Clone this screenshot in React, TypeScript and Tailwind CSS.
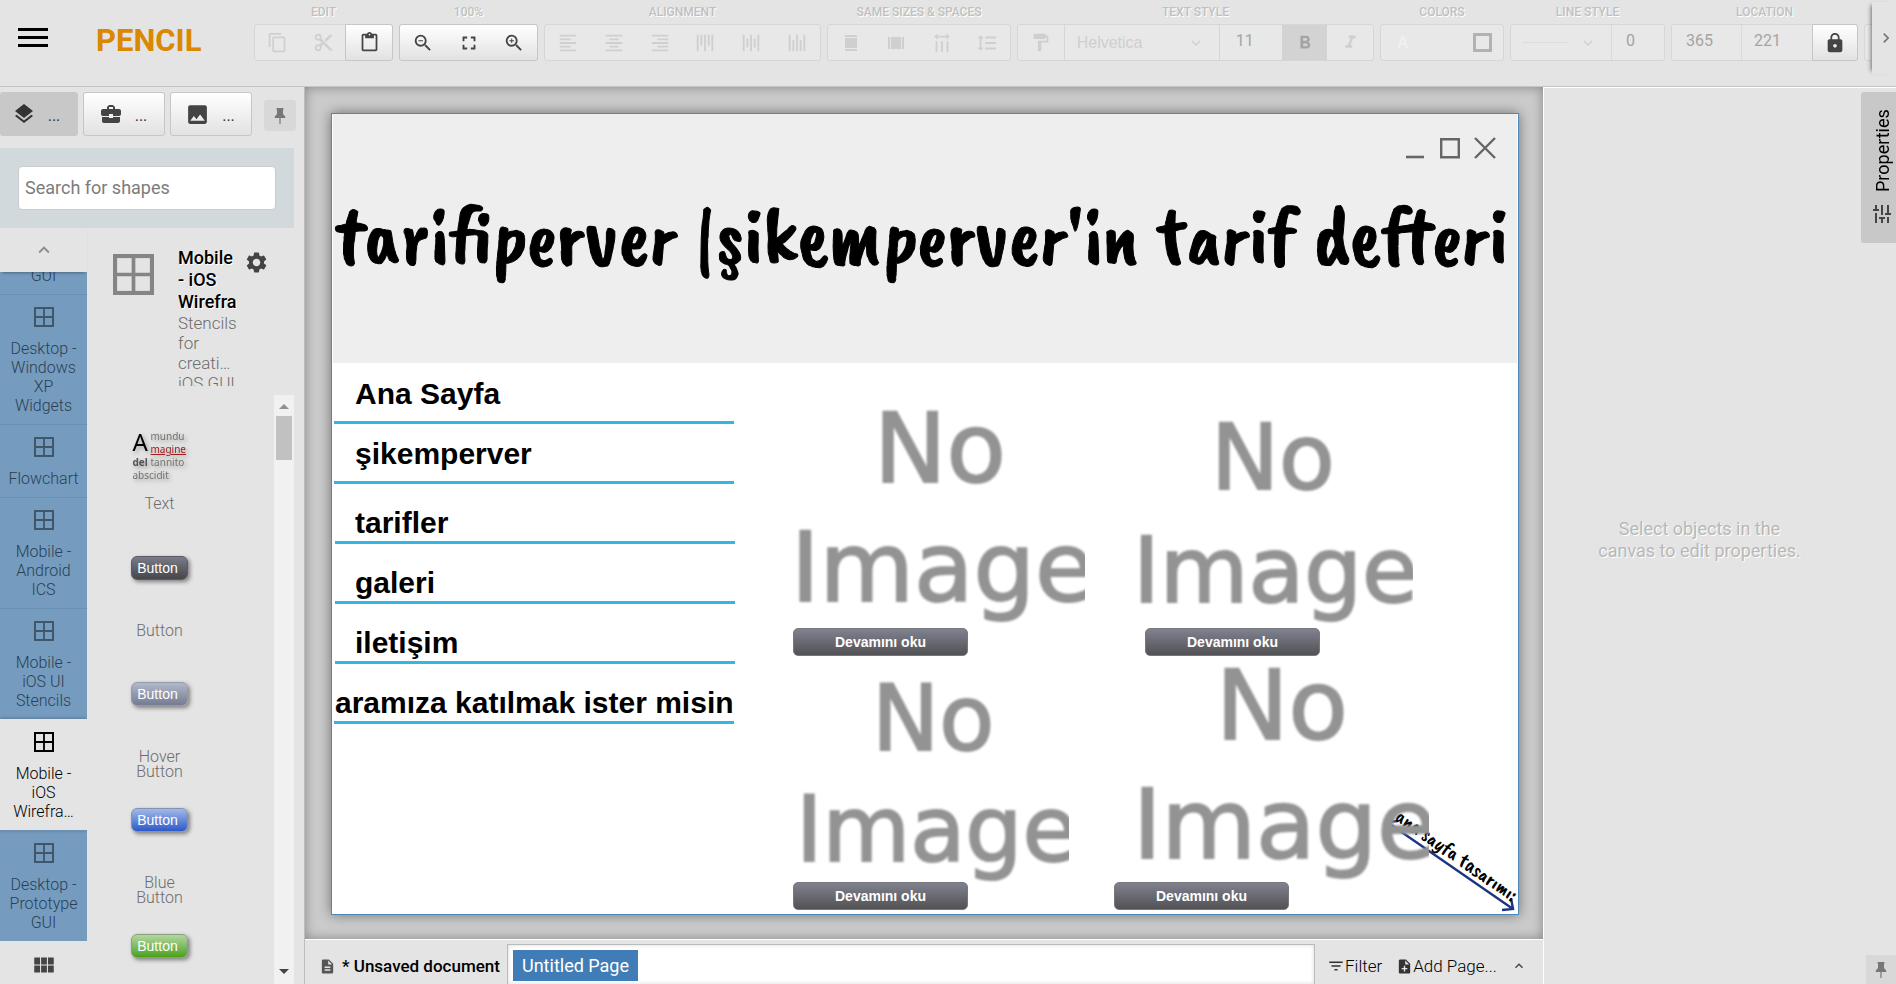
import { useState } from "react";
import type { ReactNode } from "react";
import {
  MdContentCopy, MdContentCut, MdContentPaste, MdZoomOut, MdZoomIn, MdFullscreen,
  MdFormatAlignLeft, MdFormatAlignCenter, MdFormatAlignRight, MdFormatLineSpacing,
  MdFormatPaint, MdFormatBold, MdFormatItalic, MdLock, MdLayers, MdBusinessCenter, MdImage,
  MdSettings, MdTune, MdFilterList, MdNoteAdd, MdDescription, MdViewModule,
  MdExpandMore, MdExpandLess, MdChevronRight,
} from "react-icons/md";

const raised = "border border-[#c6c6c6] bg-linear-to-b from-white to-[#e2e2e2] text-[#444]";

function WindowIcon({ className }: { className: string }) {
  return (
    <svg viewBox="0 0 20 20" className={className} fill="none" stroke="currentColor" aria-hidden="true">
      <rect x="1" y="1" width="18" height="18" strokeWidth="2" />
      <path d="M10 1v18M1 10h18" strokeWidth="1.8" />
    </svg>
  );
}

function PinIcon() {
  return (
    <svg viewBox="0 0 12 16" className="h-4 w-3" fill="currentColor" aria-hidden="true">
      <path d="M2.5 0h7v1.4H9V6l2.2 2.6V10H.8V8.6L3 6V1.4h-.5z" />
      <path d="M5.4 10h1.2v6H5.4z" />
    </svg>
  );
}

function SameWidthIcon({ className = "" }: { className?: string }) {
  return (
    <svg viewBox="0 0 16 16" className={`size-4 ${className}`} fill="currentColor" aria-hidden="true">
      <path d="M2 0h12v2H2zM2 3h12v10H2zM2 14h12v2H2z" />
    </svg>
  );
}

function Group({ label, width, children }: { label: string; width: string; children?: ReactNode }) {
  return (
    <div className={`flex shrink-0 flex-col ${width}`}>
      <div className="h-6 pt-1 text-center text-xs leading-4 font-medium text-[#c0c0c0] [text-shadow:1px_1px_0_#fff]">{label}</div>
      <div className="flex h-[37px] rounded-[3px] border border-[#d6d6d6] bg-[#e8e8e8] text-[#cfcfcf]">{children}</div>
    </div>
  );
}

function Tool({ label, children, className = "" }: { label: string; children: ReactNode; className?: string }) {
  return (
    <button type="button" aria-label={label} className={`flex min-w-0 flex-1 items-center justify-center ${className}`}>
      {children}
    </button>
  );
}

function Toolbar() {
  return (
    <div className="flex min-w-0 flex-1 gap-[6px] overflow-hidden">
      <Group label="EDIT" width="w-[139px]">
        <Tool label="Copy"><MdContentCopy size={21} /></Tool>
        <Tool label="Cut"><MdContentCut size={21} /></Tool>
        <Tool label="Paste" className={`-m-px rounded-r-[3px] ${raised}`}><MdContentPaste size={21} /></Tool>
      </Group>
      <Group label="100%" width="w-[139px]">
        <div className={`-m-px flex flex-1 rounded-[3px] ${raised}`}>
          <Tool label="Zoom out"><MdZoomOut size={22} /></Tool>
          <Tool label="Fit to screen"><MdFullscreen size={22} /></Tool>
          <Tool label="Zoom in"><MdZoomIn size={22} /></Tool>
        </div>
      </Group>
      <Group label="ALIGNMENT" width="w-[277px]">
        <Tool label="Align left"><MdFormatAlignLeft size={22} /></Tool>
        <Tool label="Align center"><MdFormatAlignCenter size={22} /></Tool>
        <Tool label="Align right"><MdFormatAlignRight size={22} /></Tool>
        <Tool label="Align top"><MdFormatAlignLeft size={22} className="rotate-90" /></Tool>
        <Tool label="Align middle"><MdFormatAlignCenter size={22} className="rotate-90" /></Tool>
        <Tool label="Align bottom"><MdFormatAlignLeft size={22} className="-rotate-90" /></Tool>
      </Group>
      <Group label="SAME SIZES & SPACES" width="w-[184px]">
        <Tool label="Same width"><SameWidthIcon /></Tool>
        <Tool label="Same height"><SameWidthIcon className="rotate-90" /></Tool>
        <Tool label="Same horizontal space"><MdFormatLineSpacing size={22} className="rotate-90" /></Tool>
        <Tool label="Same vertical space"><MdFormatLineSpacing size={22} /></Tool>
      </Group>
      <Group label="TEXT STYLE" width="w-[357px]">
        <Tool label="Format painter"><MdFormatPaint size={21} /></Tool>
        <div className="relative w-[156px] border-x border-[#d6d6d6]">
          <select aria-label="Font" className="h-full w-full appearance-none bg-transparent px-3 font-['Liberation_Sans',sans-serif] text-base outline-none">
            <option>Helvetica</option>
          </select>
          <MdExpandMore size={18} className="pointer-events-none absolute top-[9px] right-[14px]" />
        </div>
        <input aria-label="Font size" defaultValue="11" className="w-[62px] pb-1 pl-4 text-base text-[#a4a4a4] outline-none" />
        <Tool label="Bold" className="bg-[#d3d3d3] text-[#a4a4a4]"><MdFormatBold size={22} /></Tool>
        <Tool label="Italic"><MdFormatItalic size={21} /></Tool>
      </Group>
      <Group label="COLORS" width="w-[124px]">
        <div className="flex flex-1 items-center justify-between pr-[11px] pl-4">
          <button type="button" className="font-['Liberation_Sans',sans-serif] text-base font-bold text-[#f0f0f0]">A</button>
          <button type="button" aria-label="Border color" className="size-[19px] border-3 border-[#b2b2b2]" />
        </div>
      </Group>
      <Group label="LINE STYLE" width="w-[155px]">
        <button type="button" aria-label="Line style" className="flex w-[101px] items-center justify-between border-r border-[#dadada] pr-[14px] pl-[11px]">
          <span className="h-px w-[46px] bg-[#dcdcdc]" />
          <MdExpandMore size={18} />
        </button>
        <input aria-label="Line width" defaultValue="0" className="w-[52px] pb-1 pl-[14px] text-base text-[#a4a4a4] outline-none" />
      </Group>
      <Group label="LOCATION" width="w-[187px]">
        <input aria-label="X" defaultValue="365" className="w-[70px] border-r border-[#dadada] pb-1 pl-[14px] text-base text-[#a4a4a4] outline-none" />
        <input aria-label="Y" defaultValue="221" className="w-[71px] pb-1 pl-3 text-base text-[#a4a4a4] outline-none" />
        <Tool label="Lock ratio" className={`-m-px rounded-r-[3px] ${raised}`}><MdLock size={22} /></Tool>
      </Group>
      <Group label="" width="w-[187px]" />
    </div>
  );
}

const stencilGroups = [
  { lines: ["GUI"] },
  { lines: ["Desktop -", "Windows", "XP", "Widgets"] },
  { lines: ["Flowchart"] },
  { lines: ["Mobile -", "Android", "ICS"] },
  { lines: ["Mobile -", "iOS UI", "Stencils"] },
  { lines: ["Mobile -", "iOS", "Wirefra…"], active: true },
  { lines: ["Desktop -", "Prototype", "GUI"] },
];

const stencilButtons = [
  { name: ["Button"], look: "border-[#5a5b63] from-[#7a7c8a] to-[#46464a]" },
  { name: ["Hover", "Button"], look: "border-[#949cac] from-[#b3b9cb] to-[#757c92]" },
  { name: ["Blue", "Button"], look: "border-[#8592b4] from-[#a4b8e6] to-[#2c59c8]" },
  { name: [], look: "border-[#8aa07c] from-[#b4d6a0] to-[#49a10c]" },
];

function PanelTab({ label, active = false, children }: { label: string; active?: boolean; children: ReactNode }) {
  return (
    <button
      type="button"
      aria-label={label}
      className={`flex h-11 items-center justify-center gap-3 rounded-[3px] ${active ? "w-[78px] bg-[#c8c8c8] pr-[6px] text-[#333]" : `w-[82px] pr-[2px] ${raised}`}`}
    >
      {children}
      <span className="pt-1 text-base text-[#333]">...</span>
    </button>
  );
}

function LeftPanel() {
  const [query, setQuery] = useState("");
  return (
    <aside className="flex w-[305px] shrink-0 flex-col border-r border-[#bdbdbd] bg-[#e4e4e4]">
      <div className="flex gap-[5px] pt-[5px]">
        <PanelTab label="Shapes" active><MdLayers size={24} /></PanelTab>
        <PanelTab label="My stuff"><MdBusinessCenter size={24} /></PanelTab>
        <PanelTab label="Clipart"><MdImage size={25} /></PanelTab>
        <button type="button" aria-label="Pin panel" className="mt-2 ml-[7px] flex h-[31px] w-8 items-center justify-center rounded-[3px] bg-[#d8d8d8] text-[#777]">
          <PinIcon />
        </button>
      </div>
      <div className="mt-3 mr-[10px] bg-[#d2d9dc] px-[18px] py-[18px]">
        <input
          aria-label="Search for shapes"
          placeholder="Search for shapes"
          value={query}
          onChange={(e) => setQuery(e.target.value)}
          className="h-11 w-[258px] rounded-[4px] border border-[#cbcbcb] bg-white px-[6px] pb-[2px] text-lg outline-none placeholder:text-[#7c7c7c]"
        />
      </div>
      <div className="flex min-h-0 flex-1">
        <nav aria-label="Stencil collections" className="flex w-[87px] shrink-0 flex-col">
          <button type="button" aria-label="Scroll up" className="z-10 flex h-11 shrink-0 items-center justify-center bg-[#e4e4e4] text-[#8b8b8b] shadow-[0_3px_3px_-2px_rgba(0,0,0,.35)]">
            <MdExpandLess size={22} />
          </button>
          <div className="flex min-h-0 flex-1 flex-col justify-end overflow-hidden bg-[#759cbf] text-base leading-[19px] font-light text-[#2b4055]">
            {stencilGroups.map((group) => (
              <button
                key={group.lines.join(" ")}
                type="button"
                className={`flex shrink-0 flex-col items-center border-t pt-3 pb-[9px] ${
                  group.active
                    ? "border-[#e4e4e4] bg-[#e4e4e4] text-black shadow-[0_0_4px_rgba(0,0,0,.35)]"
                    : "border-[#6a90b3]"
                }`}
              >
                <WindowIcon className={`mb-3 size-5 ${group.active ? "text-black" : "text-[#42566a]"}`} />
                {group.lines.map((line) => <span key={line}>{line}</span>)}
              </button>
            ))}
          </div>
          <button type="button" aria-label="All collections" className="flex h-[43px] shrink-0 items-center justify-center pt-1 text-[#444]">
            <MdViewModule size={26} />
          </button>
        </nav>
        <section className="flex min-w-0 flex-1 flex-col pr-[10px]">
          <div className="flex h-[167px] shrink-0 pt-[18px] pl-[26px]">
            <WindowIcon className="mt-2 mr-6 size-[41px] shrink-0 text-[#858585]" />
            <div className="h-[140px] w-[59px] shrink-0 overflow-hidden pt-px">
              <h2 className="text-lg leading-[22px] font-medium [text-shadow:1px_1px_0_#fff]">Mobile<br />- iOS<br />Wirefra</h2>
              <p className="text-[17px] leading-5 font-light text-[#6c6c6c]">Stencils<br />for<br />creati…<br /><span className="whitespace-nowrap">iOS GUI</span></p>
            </div>
            <button type="button" aria-label="Collection settings" className="ml-[7px] flex h-8 items-center text-[#444]">
              <MdSettings size={25} />
            </button>
          </div>
          <div className="flex min-h-0 flex-1">
            <ul className="flex min-w-0 flex-1 flex-col items-center overflow-hidden pt-[35px] pr-[42px] text-base leading-[15px] font-light text-[#6c6c6c]">
              <li className="flex h-[126px] shrink-0 flex-col items-center">
                <div className="grid h-[66px] w-[54px] grid-cols-[18px_1fr] grid-rows-[26px_13px_13px] font-['Noto_Sans',sans-serif] text-[10px] leading-[13px] font-normal text-[#74746c] drop-shadow-[2px_2px_2px_rgba(0,0,0,.3)]">
                  <span className="text-[24px] leading-6 text-black">A</span>
                  <span>mundu<br /><span className="text-[#a02020] underline">magine</span></span>
                  <span className="font-bold text-[#555]">del</span><span>tannito</span>
                  <span className="col-span-2">abscidit</span>
                </div>
                <span>Text</span>
              </li>
              {stencilButtons.map((item) => (
                <li key={item.look} className="flex h-[126px] shrink-0 flex-col items-center text-center">
                  <div className="h-[67px] shrink-0">
                    <button type="button" className={`h-6 w-[57px] rounded-[6px] border bg-linear-to-b pr-1 font-['Liberation_Sans',sans-serif] text-sm leading-5 font-normal text-white shadow-[2px_2px_4px_rgba(0,0,0,.45)] ${item.look}`}>
                      Button
                    </button>
                  </div>
                  {item.name.map((word) => <span key={word}>{word}</span>)}
                </li>
              ))}
            </ul>
            <div aria-hidden="true" className="flex w-5 shrink-0 flex-col items-center justify-between bg-[#f1f1f1]">
              <div className="flex w-full flex-col items-center px-[2px]">
                <svg viewBox="0 0 10 5" className="mt-[9px] mb-[7px] h-[5px] w-[10px] fill-[#8f8f8f]"><path d="M0 5 5 0l5 5z" /></svg>
                <div className="h-11 w-full bg-[#c1c1c1]" />
              </div>
              <svg viewBox="0 0 10 5" className="mb-[10px] h-[5px] w-[10px] fill-[#444]"><path d="M0 0h10L5 5z" /></svg>
            </div>
          </div>
        </section>
      </div>
    </aside>
  );
}

const menu = [
  { text: "Ana Sayfa", textPos: "left-[23px] top-[263px]", linePos: "left-[2px] top-[307px]" },
  { text: "şikemperver", textPos: "left-[23px] top-[323px]", linePos: "left-[2px] top-[367px]" },
  { text: "tarifler", textPos: "left-[23px] top-[392px]", linePos: "left-[3px] top-[427px]" },
  { text: "galeri", textPos: "left-[23px] top-[452px]", linePos: "left-[3px] top-[487px]" },
  { text: "iletişim", textPos: "left-[23px] top-[512px]", linePos: "left-[3px] top-[547px]" },
  { text: "aramıza katılmak ister misin", textPos: "left-[3px] top-[572px]", linePos: "left-[2px] top-[607px]" },
];

const placeholders = [
  { pos: "left-[459px] top-[275px] w-[294px]", size: "text-[97px] leading-[119px]", indent: "pl-[83px]" },
  { pos: "left-[801px] top-[287px] w-[280px]", size: "text-[91px] leading-[113px]", indent: "pl-[78px]" },
  { pos: "left-[464px] top-[549px] w-[273px]", size: "text-[90px] leading-[111px]", indent: "pl-[76px]" },
  { pos: "left-[801px] top-[532px] w-[296px]", size: "text-[97px] leading-[119px]", indent: "pl-[83px]" },
];

const moreButtons = ["left-[461px] top-[514px]", "left-[813px] top-[514px]", "left-[461px] top-[768px]", "left-[782px] top-[768px]"];

function Canvas() {
  return (
    <div className="relative mt-[26px] mr-6 mb-6 ml-[26px] flex-1 overflow-hidden border border-[#4f87b8] bg-white font-['Liberation_Sans',sans-serif] shadow-[0_0_12px_rgba(0,0,0,.45)]">
      <div className="mx-px h-[249px] bg-[#eee]">
        <div className="flex items-end justify-end gap-4 pt-[23px] pr-[21px] text-[#666]">
          <svg viewBox="0 0 18 22" className="h-[22px] w-[18px]" stroke="currentColor" strokeWidth="2.6"><path d="M0 20h18" /></svg>
          <svg viewBox="0 0 20 22" className="h-[22px] w-5" fill="none" stroke="currentColor" strokeWidth="2.4"><path d="M1.2 2.2h17.6v18H1.2z" /></svg>
          <svg viewBox="0 0 22 22" className="-ml-[2px] h-[22px] w-[22px]" fill="none" stroke="currentColor" strokeWidth="2.4"><path d="M1 1l20 20M21 1L1 21" /></svg>
        </div>
      </div>
      <h1 className="absolute top-[77px] left-[3px] font-['Caveat_Brush','Liberation_Sans_Narrow',sans-serif] text-[83px] leading-[90px] font-normal whitespace-nowrap [-webkit-text-stroke:1px_#000]">
        tarifiperver |şikemperver'in tarif defteri
      </h1>
      {menu.map((item) => (
        <div key={item.text}>
          <a href="#" className={`absolute text-[30px] leading-[34px] font-bold whitespace-nowrap ${item.textPos}`}>{item.text}</a>
          <div className={`absolute h-[3px] w-[400px] bg-[#33b5e5] ${item.linePos}`} />
        </div>
      ))}
      <svg viewBox="0 0 130 92" className="absolute top-[706px] left-[1054px] h-[92px] w-[130px]" fill="none" stroke="#1c3482" strokeWidth="2.4">
        <path d="M1 2l126 87M12 1L1 2l4 10M116 90l11-1-2-11" />
      </svg>
      <div className="absolute top-[690px] left-[1073px] origin-top-left rotate-35 font-['Caveat_Brush','Liberation_Sans_Narrow',sans-serif] text-[21px] leading-6 whitespace-nowrap">
        ana sayfa tasarımı:
      </div>
      {placeholders.map((p) => (
        <div key={p.pos} className={`absolute overflow-hidden font-['DejaVu_Sans',sans-serif] whitespace-nowrap text-[#939393] ${p.pos} ${p.size}`}>
          <div className="blur-[1px] [-webkit-text-stroke:2px_#939393]">
            <div className={p.indent}>No</div>
            <div>Image</div>
          </div>
        </div>
      ))}
      {moreButtons.map((pos) => (
        <button key={pos} type="button" className={`absolute h-7 w-[175px] rounded-[5px] border border-[#77787f] bg-linear-to-b from-[#80828f] to-[#525255] text-sm leading-none font-bold text-white ${pos}`}>
          Devamını oku
        </button>
      ))}
    </div>
  );
}

export default function App() {
  return (
    <div className="flex h-screen flex-col overflow-hidden bg-[#e4e4e4] font-[Roboto,sans-serif] text-black">
      <header className="flex h-[87px] shrink-0 border-b border-[#c4c4c4]">
        <button type="button" aria-label="Menu" className="mt-7 ml-[18px] flex h-[19px] w-[30px] flex-col justify-between">
          <span className="h-[3px] w-full bg-black" />
          <span className="h-[3px] w-full bg-black" />
          <span className="h-[3px] w-full bg-black" />
        </button>
        <div className="w-[206px] shrink-0 pt-[23px] pl-12 text-[31px] leading-9 font-bold text-[#d98800]">PENCIL</div>
        <Toolbar />
        <button type="button" aria-label="More tools" className="mt-[2px] flex h-[72px] w-6 shrink-0 items-center justify-end bg-[#e4e4e4] text-[#777] shadow-[-4px_0_4px_-3px_rgba(0,0,0,.5)]">
          <MdChevronRight size={20} />
        </button>
      </header>
      <div className="flex min-h-0 flex-1">
        <LeftPanel />
        <main className="flex min-w-0 flex-1 flex-col">
          <div className="flex min-h-0 flex-1 bg-[#cbcbcb] shadow-[inset_0_0_12px_rgba(0,0,0,.35)]">
            <Canvas />
          </div>
          <footer className="flex h-[45px] shrink-0 items-start border-t border-white bg-[#e4e4e4]">
            <div className="flex items-center gap-[6px] pt-[14px] pl-[14px] text-[17px] leading-6 font-medium">
              <MdDescription size={17} className="text-[#555]" />
              <span className="w-[158px] whitespace-nowrap">* Unsaved document</span>
            </div>
            <div className="ml-[7px] flex h-full flex-1 pt-1">
              <div className="flex flex-1 items-start border border-b-0 border-[#bbb] bg-white pt-[5px] pl-[5px] shadow-[inset_0_0_4px_rgba(0,0,0,.15)]">
                <button type="button" className="h-[31px] bg-[#407db7] px-[9px] text-lg leading-7 text-white">Untitled Page</button>
              </div>
            </div>
            <div className="flex w-[228px] items-center pt-[14px] pl-3 text-[17px] leading-6 font-light">
              <button type="button" className="flex items-center"><MdFilterList size={18} className="text-[#333]" />Filter</button>
              <button type="button" className="ml-[14px] flex items-center"><MdNoteAdd size={17} className="text-[#333]" />Add Page...</button>
              <button type="button" aria-label="Expand pages" className="ml-[14px] text-[#444]"><MdExpandLess size={16} /></button>
            </div>
          </footer>
        </main>
        <aside className="flex w-[353px] shrink-0 border-t border-l border-white">
          <p className="flex-1 self-center pt-2 pr-[38px] pl-8 text-center text-lg leading-[22px] text-[#b8b8b8] [text-shadow:1px_1px_0_#fff]">
            Select objects in the<br />canvas to edit properties.
          </p>
          <div className="flex w-[35px] flex-col items-end justify-between">
            <button type="button" className="mt-1 flex h-[151px] w-[35px] rotate-180 items-center gap-[10px] rounded-r-[3px] bg-[#c8c8c8] pt-[17px] pr-[7px] text-lg leading-[29px] [writing-mode:vertical-rl]">
              <MdTune size={24} className="rotate-90 text-[#444]" />
              <span>Properties</span>
            </button>
            <button type="button" aria-label="Pin properties" className="flex h-[29px] w-[30px] items-center justify-center bg-[#d8d8d8] text-[#777]"><PinIcon /></button>
          </div>
        </aside>
      </div>
    </div>
  );
}
